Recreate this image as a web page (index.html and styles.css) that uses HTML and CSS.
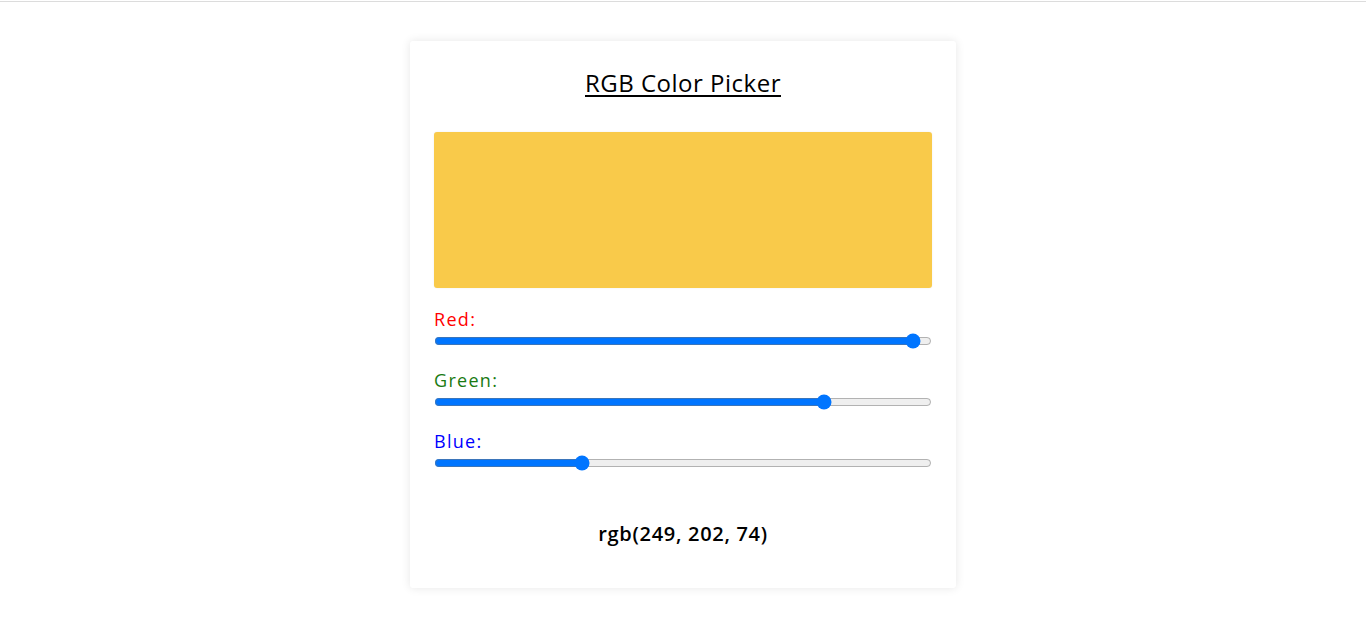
FILE: index.html
```html
<!DOCTYPE html>
<html lang="en">
<head>
<meta charset="utf-8">
<title>RGB Color Picker</title>
<link rel="stylesheet" href="styles.css">
</head>
<body>
<div class="topline"></div>
<main class="page">
  <section class="card">
    <h2 class="title">RGB Color Picker</h2>
    <div class="swatch"></div>
    <div class="controls">
      <div class="group">
        <label class="label red" for="r">Red:</label>
        <input class="range" id="r" type="range" min="0" max="255" value="249">
      </div>
      <div class="group">
        <label class="label green" for="g">Green:</label>
        <input class="range" id="g" type="range" min="0" max="255" value="202">
      </div>
      <div class="group">
        <label class="label blue" for="b">Blue:</label>
        <input class="range" id="b" type="range" min="0" max="255" value="74">
      </div>
    </div>
    <p class="value">rgb(249, 202, 74)</p>
  </section>
</main>
</body>
</html>
```

FILE: styles.css
```css
html, body {
  margin: 0;
  padding: 0;
  background: #ffffff;
}
body {
  font-family: "Open Sans", "DejaVu Sans", sans-serif;
  color: #000;
}
.topline {
  margin-top: 1px;
  height: 1px;
  background: #dcdcdc;
}
.page {
  display: flex;
  justify-content: center;
  padding-top: 39px;
  padding-bottom: 30px;
}
.card {
  width: 546px;
  box-sizing: border-box;
  padding: 24px;
  background: #fff;
  border-radius: 3px;
  box-shadow: 0 0 10px rgba(0, 0, 0, 0.1);
  display: flex;
  flex-direction: column;
}
.title {
  margin: 0 0 31px 0;
  font-size: 24px;
  line-height: 36px;
  font-weight: 500;
  text-align: center;
  text-decoration: underline;
  text-decoration-thickness: 2px;
  text-underline-offset: 3px;
  letter-spacing: 0.5px;
}
.swatch {
  height: 156px;
  background: rgb(249, 202, 74);
  border-radius: 3px;
  box-shadow: 0 0 2px rgba(0, 0, 0, 0.08);
}
.controls {
  display: flex;
  flex-direction: column;
  gap: 18px;
  margin-top: 18px;
}
.group {
  display: flex;
  flex-direction: column;
}
.label {
  font-size: 18px;
  line-height: 27px;
  font-weight: 500;
  letter-spacing: 1.3px;
}
.red { color: #ff0000; }
.green { color: #1a7a12; }
.blue { color: #0000ff; }
.range {
  display: block;
  width: 100%;
  height: 16px;
  margin: 0;
  accent-color: #0075ff;
}
.value {
  margin: 48px 0 15px 0;
  font-size: 20px;
  line-height: 30px;
  font-weight: 600;
  text-align: center;
  letter-spacing: 0.7px;
}
```
